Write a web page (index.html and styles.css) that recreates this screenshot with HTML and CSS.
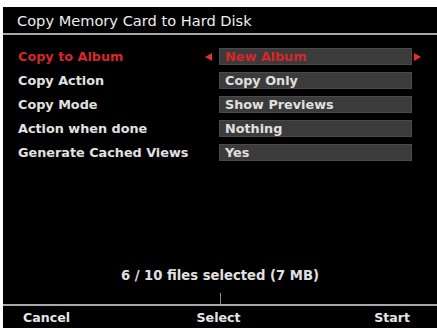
FILE: index.html
```html
<!DOCTYPE html>
<html>
<head>
<meta charset="utf-8">
<link rel="stylesheet" href="styles.css">
</head>
<body>
<div class="screen">
  <div class="title">Copy Memory Card to Hard Disk</div>
  <div class="rows">
    <div class="row active">
      <div class="label">Copy to Album</div>
      <div class="arrow left"></div>
      <div class="value">New Album</div>
      <div class="arrow right"></div>
    </div>
    <div class="row">
      <div class="label">Copy Action</div>
      <div class="arrow"></div>
      <div class="value">Copy Only</div>
      <div class="arrow"></div>
    </div>
    <div class="row">
      <div class="label">Copy Mode</div>
      <div class="arrow"></div>
      <div class="value">Show Previews</div>
      <div class="arrow"></div>
    </div>
    <div class="row">
      <div class="label">Action when done</div>
      <div class="arrow"></div>
      <div class="value">Nothing</div>
      <div class="arrow"></div>
    </div>
    <div class="row">
      <div class="label">Generate Cached Views</div>
      <div class="arrow"></div>
      <div class="value">Yes</div>
      <div class="arrow"></div>
    </div>
  </div>
  <div class="status">6 / 10 files selected (7 MB)</div>
  <div class="tick"></div>
  <div class="footer">
    <span class="btn cancel">Cancel</span>
    <span class="btn select">Select</span>
    <span class="btn start">Start</span>
  </div>
</div>
</body>
</html>
```
FILE: styles.css
```css
html, body {
  margin: 0;
  padding: 0;
  background: #fff;
}
.screen {
  margin: 7px 0 0 3px;
  height: 321px;
  background: #000;
  color: #e6e6e6;
  font-family: "DejaVu Sans", Verdana, sans-serif;
  display: flex;
  flex-direction: column;
}
.title {
  font-size: 14.6px;
  height: 24px;
  line-height: 24px;
  padding-top: 2px;
  padding-left: 14px;
  border-bottom: 2px solid #a8a8a8;
  color: #eee;
}
.rows {
  display: flex;
  flex-direction: column;
  gap: 7px;
  padding-top: 13px;
  flex: 1;
}
.row {
  display: flex;
  align-items: center;
  height: 17px;
  font-size: 12.8px;
  font-weight: bold;
}
.label {
  width: 187px;
  padding-left: 15px;
  color: #e2e2e2;
}
.arrow {
  width: 14px;
  display: flex;
  justify-content: flex-start;
}
.arrow.left::before {
  content: "";
  border-top: 4.5px solid transparent;
  border-bottom: 4.5px solid transparent;
  border-right: 7px solid #e52e2e;
}
.arrow.right::before {
  content: "";
  margin-left: 2px;
  border-top: 4.5px solid transparent;
  border-bottom: 4.5px solid transparent;
  border-left: 7px solid #e52e2e;
}
.value {
  width: 187px;
  height: 17px;
  line-height: 17px;
  padding-left: 6px;
  background: #3b3b3b;
  color: #e0e0e0;
  box-shadow: inset 0 0 0 1px #4a4a4a;
}
.active .label, .active .value {
  color: #d8262b;
}
.status {
  text-align: center;
  font-size: 13.2px;
  font-weight: bold;
  color: #e0e0e0;
  height: 18px;
  line-height: 18px;
  margin-bottom: 8px;
}
.tick {
  align-self: center;
  width: 1px;
  height: 11px;
  margin-left: 1px;
  background: #888;
}
.footer {
  border-top: 2px solid #a8a8a8;
  display: grid;
  grid-template-columns: 1fr auto 1fr;
  font-size: 12.6px;
  font-weight: bold;
  color: #e6e6e6;
  height: 22px;
  line-height: 24px;
  padding: 0 27px 0 20px;
}
.select {
  margin-left: 4px;
}
.start {
  justify-self: end;
}
```
